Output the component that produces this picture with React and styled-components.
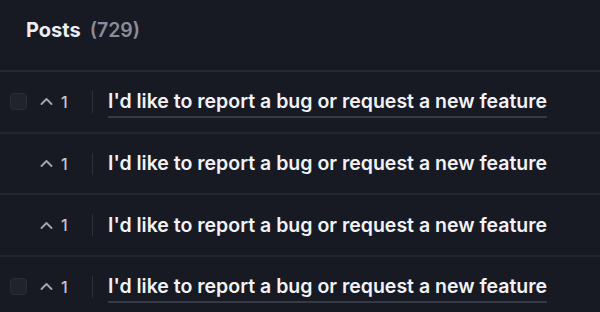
import React from "react";
import styled, { createGlobalStyle } from "styled-components";

const Global = createGlobalStyle`
  html, body { margin: 0; padding: 0; background: #181a23; }
  body { font-family: Inter, "Noto Sans", sans-serif; -webkit-font-smoothing: antialiased; }
`;

const Page = styled.div`
  width: 600px;
  height: 312px;
  overflow: hidden;
  background: #181a23;
`;

const Header = styled.div`
  padding: 14px 0 0 26px;
  display: flex;
  align-items: baseline;
  gap: 9px;
  border-bottom: 2px solid #252732;
  box-sizing: border-box;
  height: 72px;
`;

const Title = styled.h2`
  margin: 0;
  font-size: 20px;
  line-height: 32px;
  font-weight: 700;
  color: #eceef3;
`;

const Count = styled.span`
  font-size: 19.5px;
  font-weight: 600;
  color: #8a8c9b;
`;

const Row = styled.div`
  height: 59.7px;
  display: flex;
  align-items: center;
  border-bottom: 2px solid #232530;
  padding-left: 10px;
`;

const Check = styled.span`
  width: 17px;
  height: 17px;
  border-radius: 4px;
  border: 1px solid #2a2c37;
  background: #20222c;
  box-sizing: border-box;
  visibility: ${p => (p.$show ? "visible" : "hidden")};
  flex: none;
`;

const Vote = styled.div`
  display: flex;
  align-items: center;
  margin-left: 13px;
  width: 52px;
  color: #c3c5d0;
  font-size: 16px;
  font-weight: 500;
  gap: 8px;
`;

const Divider = styled.span`
  width: 1px;
  height: 22px;
  background: #2e3039;
  flex: none;
`;

const PostTitle = styled.a`
  margin-left: 15px;
  font-size: 19.5px;
  font-weight: 600;
  color: #f1f2f6;
  text-decoration: none;
  padding-bottom: 3px;
  padding-top: 4px;
  border-bottom: 2px solid ${p => (p.$active ? "#363946" : "transparent")};
  white-space: nowrap;
  letter-spacing: 0;
`;

const Caret = () => (
  <svg width="13" height="9" viewBox="0 0 13 9" fill="none">
    <path d="M1.5 7 L6.5 2 L11.5 7" stroke="#a3a5b3" strokeWidth="1.9" strokeLinecap="round" strokeLinejoin="round" />
  </svg>
);

const rows = [
  { check: true, active: true },
  { check: false, active: false },
  { check: false, active: false },
  { check: true, active: true },
];

export default function App() {
  return (
    <Page>
      <Global />
      <Header>
        <Title>Posts</Title>
        <Count>(729)</Count>
      </Header>
      {rows.map((r, i) => (
        <Row key={i}>
          <Check $show={r.check} />
          <Vote>
            <Caret />
            <span>1</span>
          </Vote>
          <Divider />
          <PostTitle $active={r.active}>I'd like to report a bug or request a new feature</PostTitle>
        </Row>
      ))}
    </Page>
  );
}
